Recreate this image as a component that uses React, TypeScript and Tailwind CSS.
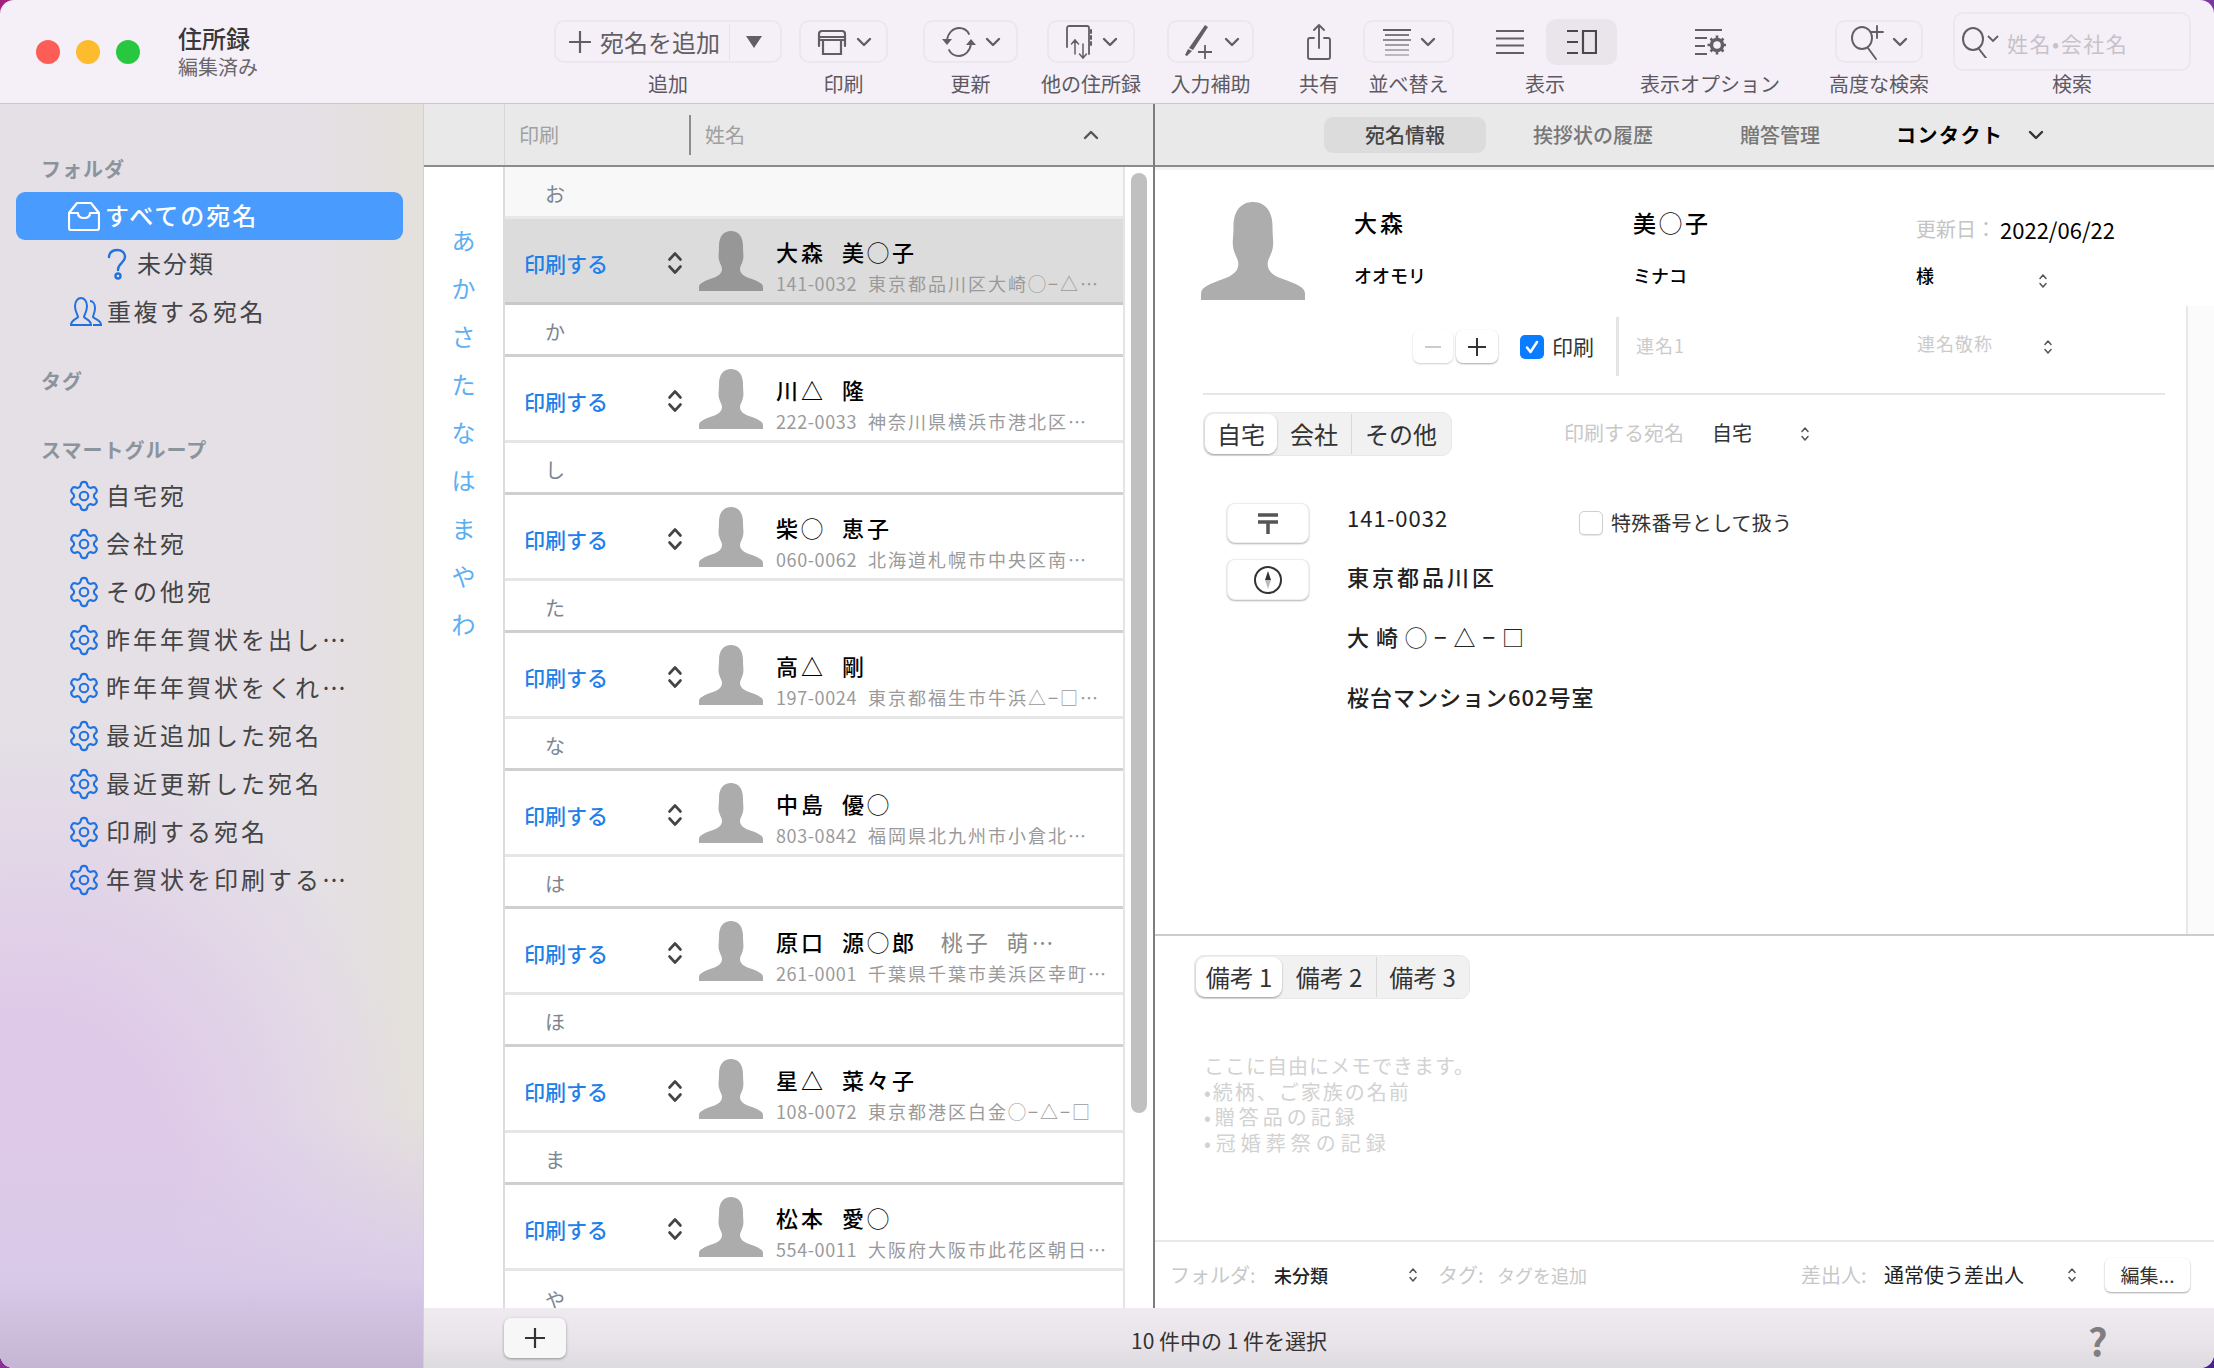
import React from 'react';
import { Settings } from 'lucide-react';

const ICON = '#625e64';

const Chevron: React.FC<{ dir?: 'up' | 'down'; color?: string }> = ({ dir = 'down', color = ICON }) => (
    <svg width="16" height="10" viewBox="0 0 16 10" fill="none" stroke={color} strokeWidth="2.4" strokeLinecap="round" strokeLinejoin="round">
        <path d={dir === 'down' ? 'M2 2l6 6 6-6' : 'M2 8l6-6 6 6'} />
    </svg>
);

const UpDown: React.FC<{ small?: boolean }> = ({ small }) =>
    small ? (
        <svg width="10" height="16" viewBox="0 0 10 16" fill="none" stroke="#555" strokeWidth="1.5" strokeLinecap="round" strokeLinejoin="round" className="shrink-0">
            <path d="M2 5.5L5 2l3 3.5M2 10.5L5 14l3-3.5" />
        </svg>
    ) : (
        <svg width="16" height="24" viewBox="0 0 16 24" fill="none" stroke="#444" strokeWidth="2.6" strokeLinecap="round" strokeLinejoin="round" className="shrink-0 mt-[4px]">
            <path d="M2.5 8.5L8 2.5l5.5 6M2.5 15.5L8 21.5l5.5-6" />
        </svg>
    );

const Silhouette: React.FC<{ w: number; h: number; color: string }> = ({ w, h, color }) => (
    <svg width={w} height={h} viewBox="0 0 64 60" preserveAspectRatio="none" className="shrink-0">
        <path
            fill={color}
            d="M32 0C25 0 20 5 20 15C20 22 19 25 20 29C21 33 23 35 23 38C23 42 20 45 14 47C6 50 0 52 0 56L0 60L64 60L64 56C64 52 58 50 50 47C44 45 41 42 41 38C41 35 43 33 44 29C45 25 44 22 44 15C44 5 39 0 32 0Z"
        />
    </svg>
);

// toolbar icons
const PrintIcon = () => (
    <svg width="32" height="32" viewBox="0 0 32 32" fill="none" stroke={ICON} strokeWidth="2.2">
        <path d="M3 20V8a3 3 0 0 1 3-3h20a3 3 0 0 1 3 3v12M3 11h26" strokeLinecap="round" />
        <path d="M3 14h26M7 14h18v14H7z" />
    </svg>
);

const RefreshIcon = () => (
    <svg width="36" height="36" viewBox="0 0 36 36" fill="none" stroke={ICON} strokeWidth="1.8">
        <path d="M6 16C7 9 12 4 18 4c4 0 8 2 10 6M30 20c-1 7-6 12-12 12-4 0-8-2-10-6" strokeLinecap="round" />
        <path d="M1 15h10l-5 6zM25 21h10l-5-6z" fill={ICON} stroke="none" />
    </svg>
);

const AddressBookIcon = () => (
    <svg width="30" height="38" viewBox="0 0 30 38" fill="none" stroke={ICON} strokeWidth="1.8" strokeLinecap="round">
        <path d="M3 24V5a2 2 0 0 1 2-2h18a2 2 0 0 1 2 2v26" />
        <path d="M27 7v3M27 13v3M27 19v3" strokeWidth="2" />
        <path d="M11 31V17M7.5 21L11 17l3.500 4M19 21v14M15.500 31l3.500 4 3.500-4" strokeWidth="1.500" />
    </svg>
);

const PenPlusIcon = () => (
    <svg width="34" height="36" viewBox="0 0 34 36" fill="none" stroke={ICON}>
        <path d="M23 1l3 2-15 23-4-2z" fill={ICON} stroke="none" />
        <path d="M6 25l4 2-5 5-2-1z" fill={ICON} stroke="none" />
        <path d="M23 21v14M16 28h14" strokeWidth="1.800" />
    </svg>
);

const ShareIcon = () => (
    <svg width="26" height="38" viewBox="0 0 26 38" fill="none" stroke={ICON} strokeWidth="1.900" strokeLinecap="round" strokeLinejoin="round">
        <path d="M8 15H4a2 2 0 0 0-2 2v17a2 2 0 0 0 2 2h18a2 2 0 0 0 2-2V17a2 2 0 0 0-2-2h-4" />
        <path d="M13 25V2M8 7l5-5 5 5" />
    </svg>
);

const SortIcon = () => (
    <svg width="30" height="28" viewBox="0 0 30 28" fill="none" strokeWidth="2">
        <path d="M1 2h28" stroke="#625e64" />
        <path d="M3 7h24" stroke="#7c787e" />
        <path d="M1 12h28" stroke="#8f8b91" />
        <path d="M3 17h24" stroke="#a09ca2" />
        <path d="M3 22h24" stroke="#b0acb2" />
        <path d="M3 27h24" stroke="#bcb8be" />
    </svg>
);

const ListIcon = () => (
    <svg width="30" height="26" viewBox="0 0 30 26" fill="none" stroke={ICON} strokeWidth="2.200">
        <path d="M1 2h28M1 9.500h28M1 16.500h28M1 24h28" />
    </svg>
);

const SplitIcon = () => (
    <svg width="30" height="26" viewBox="0 0 30 26" fill="none" stroke="#4b474d" strokeWidth="2.200">
        <path d="M0 2h11M0 13h11M0 24h11" />
        <path d="M16 2h13v22H16z" />
    </svg>
);

const ViewOptionsIcon = () => (
    <svg width="32" height="28" viewBox="0 0 32 28" fill="none" stroke={ICON} strokeWidth="2">
        <path d="M1 2h27M1 10h12M1 18h10M1 26h12" />
        <circle cx="23" cy="17" r="5.500" strokeWidth="3.500" />
        <path d="M23 7.500v3M23 23.500v3M13.500 17h3M29.500 17h3M16.500 10.500l2 2M27.500 21.500l2 2M16.500 23.500l2-2M27.500 12.500l2-2" strokeWidth="2.600" />
    </svg>
);

const SearchPlusIcon = () => (
    <svg width="34" height="36" viewBox="0 0 34 36" fill="none" stroke={ICON} strokeWidth="1.900" strokeLinecap="round">
        <ellipse cx="12" cy="14" rx="10" ry="11" />
        <path d="M18 24l8 11M27 2v12M21 8h12" />
    </svg>
);

const SearchIcon = () => (
    <svg width="26" height="32" viewBox="0 0 26 32" fill="none" stroke={ICON} strokeWidth="2" strokeLinecap="round">
        <ellipse cx="12" cy="13" rx="10" ry="11" />
        <path d="M18 23l7 9" />
    </svg>
);

const ToolButton: React.FC<{ w: string; children: React.ReactNode }> = ({ w, children }) => (
    <div className={`${w} h-[43px] rounded-[10px] border-2 border-[#ebe7ed] flex items-center justify-center gap-[8px]`}>{children}</div>
);

const ToolGroup: React.FC<{ label: string; ml: string; w: string; children: React.ReactNode }> = ({ label, ml, w, children }) => (
    <div className={`${ml} ${w} shrink-0 flex flex-col items-center`}>
        <div className="h-[43px] mt-[8px] flex items-center justify-center">{children}</div>
        <div className="mt-[9px] text-[20px] leading-[24px] text-[#5d595f] whitespace-nowrap">{label}</div>
    </div>
);

const Toolbar = () => (
    <div className="h-[104px] shrink-0 bg-[#f5f0f7] border-b border-[#c9c7ca] flex items-start pt-[12px] relative z-10">
        <div className="flex items-center gap-[16px] ml-[36px] mt-[28px]">
            <span className="w-[24px] h-[24px] rounded-full bg-[#fc5d57]" />
            <span className="w-[24px] h-[24px] rounded-full bg-[#fdbb2e]" />
            <span className="w-[24px] h-[24px] rounded-full bg-[#27c83f]" />
        </div>
        <div className="ml-[38px] w-[376px] shrink-0 mt-[10px]">
            <div className="text-[24px] leading-[32px] font-medium text-[#3a383b]">住所録</div>
            <div className="text-[20px] leading-[26px] text-[#6a676b]">編集済み</div>
        </div>
        <ToolGroup label="追加" ml="ml-0" w="w-[228px]">
            <div className="w-[228px] h-[43px] rounded-[10px] border-2 border-[#ebe7ed] flex items-center pl-[12px]">
                <svg width="24" height="24" viewBox="0 0 22 22" stroke={ICON} strokeWidth="2">
                    <path d="M11 1v20M1 11h20" />
                </svg>
                <span className="ml-[8px] text-[24px] leading-none text-[#625e64] whitespace-nowrap">宛名を追加</span>
                <span className="ml-[9px] w-px h-[36px] bg-[#e6e2e8]" />
                <svg width="18" height="14" viewBox="0 0 18 14" className="ml-[15px]">
                    <path d="M1 1h16l-8 12z" fill={ICON} />
                </svg>
            </div>
        </ToolGroup>
        <ToolGroup label="印刷" ml="ml-[17px]" w="w-[89px]">
            <ToolButton w="w-[89px]">
                <PrintIcon />
                <Chevron />
            </ToolButton>
        </ToolGroup>
        <ToolGroup label="更新" ml="ml-[35px]" w="w-[95px]">
            <ToolButton w="w-[95px]">
                <RefreshIcon />
                <Chevron />
            </ToolButton>
        </ToolGroup>
        <ToolGroup label="他の住所録" ml="ml-[29px]" w="w-[88px]">
            <ToolButton w="w-[88px]">
                <AddressBookIcon />
                <Chevron />
            </ToolButton>
        </ToolGroup>
        <ToolGroup label="入力補助" ml="ml-[32px]" w="w-[87px]">
            <ToolButton w="w-[87px]">
                <PenPlusIcon />
                <Chevron />
            </ToolButton>
        </ToolGroup>
        <ToolGroup label="共有" ml="ml-[45px]" w="w-[40px]">
            <ShareIcon />
        </ToolGroup>
        <ToolGroup label="並べ替え" ml="ml-[24px]" w="w-[91px]">
            <ToolButton w="w-[91px]">
                <SortIcon />
                <Chevron />
            </ToolButton>
        </ToolGroup>
        <ToolGroup label="表示" ml="ml-[19px]" w="w-[144px]">
            <div className="flex items-center">
                <span className="w-[73px] flex justify-center">
                    <ListIcon />
                </span>
                <span className="w-[71px] h-[46px] rounded-[10px] bg-[#e9e5eb] flex items-center justify-center">
                    <SplitIcon />
                </span>
            </div>
        </ToolGroup>
        <ToolGroup label="表示オプション" ml="ml-[23px]" w="w-[140px]">
            <ViewOptionsIcon />
        </ToolGroup>
        <ToolGroup label="高度な検索" ml="ml-[55px]" w="w-[88px]">
            <ToolButton w="w-[88px]">
                <SearchPlusIcon />
                <Chevron />
            </ToolButton>
        </ToolGroup>
        <div className="ml-[30px] w-[238px] shrink-0 flex flex-col items-center">
            <div className="w-[238px] h-[59px] rounded-[10px] border-2 border-[#ebe7ed] flex items-center pl-[6px]">
                <SearchIcon />
                <svg width="12" height="8" viewBox="0 0 12 8" fill="none" stroke={ICON} strokeWidth="1.800" className="mb-[6px]">
                    <path d="M1 1l5 5 5-5" />
                </svg>
                <span className="ml-[8px] mt-[4px] text-[21px] tracking-[1.500px] text-[#c6c2c8] whitespace-nowrap">姓名•会社名</span>
            </div>
            <div className="mt-px text-[20px] leading-[24px] text-[#5d595f]">検索</div>
        </div>
    </div>
);

const InboxIcon = () => (
    <svg width="32" height="30" viewBox="0 0 32 30" fill="none" stroke="#fff" strokeWidth="2.200" strokeLinejoin="round" className="shrink-0">
        <path d="M1 12L9 2h14l8 10v15a2 2 0 0 1-2 2H3a2 2 0 0 1-2-2z" />
        <path d="M1 12h9c0 3 2 5 6 5s6-2 6-5h9" />
    </svg>
);

const QuestionIcon = () => (
    <svg width="20" height="32" viewBox="0 0 20 32" fill="none" stroke="#1f72e0" strokeWidth="2.400" className="shrink-0">
        <path d="M2 9c0-4 3-7 8-7s8 3 8 7c0 6-7 6-7 13" strokeLinecap="round" />
        <circle cx="11" cy="28" r="2.500" />
    </svg>
);

const DuplicateIcon = () => (
    <svg width="32" height="30" viewBox="0 0 32 30" fill="none" stroke="#1f72e0" strokeWidth="2" className="shrink-0">
        <path d="M1 28c0-5 6-6 7-8 0-2-3-5-3-11 0-5 3-8 6-8s6 3 6 8c0 6-3 9-3 11 1 2 7 3 7 8z" />
        <path d="M20 4c3 0 5 3 5 7 0 5-2 7-2 9 1 2 8 3 8 8h-8" />
    </svg>
);

const SidebarLabel: React.FC<{ mt: string; children: React.ReactNode }> = ({ mt, children }) => (
    <div className={`${mt} pl-[41px] h-[28px] text-[20px] leading-[28px] font-bold tracking-[1px] text-[#8b949d]`}>{children}</div>
);

const smartGroups = ['自宅宛', '会社宛', 'その他宛', '昨年年賀状を出し…', '昨年年賀状をくれ…', '最近追加した宛名', '最近更新した宛名', '印刷する宛名', '年賀状を印刷する…'];

const Sidebar = () => (
    <div className="w-[424px] shrink-0 h-full pt-[51px] bg-[linear-gradient(180deg,transparent_93%,#c5b6d3_100%),linear-gradient(180deg,transparent_80%,#d9c9e9_94%),radial-gradient(ellipse_380px_430px_at_8%_84%,#dfc9e8_35%,transparent),linear-gradient(90deg,#e4e0e6_70%,#e4e0dc_100%)] border-r border-[#d3d0d3]">
        <SidebarLabel mt="mt-0">フォルダ</SidebarLabel>
        <div className="mt-[9px] ml-[16px] w-[387px] h-[48px] rounded-[9px] bg-[#4a9bfe] flex items-center pl-[52px] gap-[5px] text-white text-[24px] tracking-[2px] font-medium">
            <InboxIcon />
            <span className="-mt-[3px]">すべての宛名</span>
        </div>
        <div className="h-[48px] pl-[107px] flex items-center gap-[10px] text-[24px] tracking-[2px] text-[#444]">
            <QuestionIcon />
            <span className="-mt-[3px]">未分類</span>
        </div>
        <div className="h-[48px] pl-[70px] flex items-center gap-[5px] text-[24px] tracking-[2.500px] text-[#444]">
            <DuplicateIcon />
            <span className="-mt-[3px]">重複する宛名</span>
        </div>
        <SidebarLabel mt="mt-[31px]">タグ</SidebarLabel>
        <SidebarLabel mt="mt-[41px]">スマートグループ</SidebarLabel>
        <div className="mt-[8px]">
            {smartGroups.map((name) => (
                <div key={name} className="h-[48px] pl-[67px] flex items-center gap-[5px] text-[24px] tracking-[3px] text-[#444]">
                    <Settings size={34} strokeWidth={1.5} color="#1f72e0" className="shrink-0" />
                    <span className="-mt-[3px] whitespace-nowrap">{name}</span>
                </div>
            ))}
        </div>
    </div>
);

interface Person {
    section: string;
    name: string;
    extra?: string;
    zip: string;
    address: string;
}

const people: Person[] = [
    { section: 'お', name: '大森  美◯子', zip: '141-0032', address: '東京都品川区大崎◯−△…' },
    { section: 'か', name: '川△  隆', zip: '222-0033', address: '神奈川県横浜市港北区…' },
    { section: 'し', name: '柴◯  恵子', zip: '060-0062', address: '北海道札幌市中央区南…' },
    { section: 'た', name: '高△  剛', zip: '197-0024', address: '東京都福生市牛浜△−□…' },
    { section: 'な', name: '中島  優◯', zip: '803-0842', address: '福岡県北九州市小倉北…' },
    { section: 'は', name: '原口  源◯郎', extra: '桃子  萌…', zip: '261-0001', address: '千葉県千葉市美浜区幸町…' },
    { section: 'ほ', name: '星△  菜々子', zip: '108-0072', address: '東京都港区白金◯−△−□' },
    { section: 'ま', name: '松本  愛◯', zip: '554-0011', address: '大阪府大阪市此花区朝日…' },
];

const kana = ['あ', 'か', 'さ', 'た', 'な', 'は', 'ま', 'や', 'わ'];

const PersonRow: React.FC<{ person: Person; selected: boolean }> = ({ person, selected }) => (
    <>
        <div className={`h-[52px] shrink-0 pl-[40px] pt-[5px] flex items-center border-b-[3px] border-[#cfcfcf] text-[20px] text-[#7c8792] ${selected ? 'bg-[#f8f8f8] border-[#e8e8e8]' : ''}`}>
            {person.section}
        </div>
        <div className={`h-[86px] shrink-0 flex items-center border-b-[3px] ${selected ? 'bg-[#dcdcdc] border-[#c8c8c8]' : 'border-[#e6e6e6]'}`}>
            <span className="ml-[19px] mt-[6px] w-[143px] shrink-0 text-[21px] font-medium text-[#1f80e8] whitespace-nowrap">印刷する</span>
            <UpDown />
            <span className="ml-[16px]">
                <Silhouette w={64} h={60} color={selected ? '#979797' : '#acacac'} />
            </span>
            <div className="ml-[13px] min-w-0 flex-1 mt-[9px]">
                <div className="text-[22px] leading-[32px] font-medium tracking-[3px] text-black whitespace-pre">
                    {person.name}
                    {person.extra && <span className="font-normal text-[#8a8a8a]">{'   ' + person.extra}</span>}
                </div>
                <div className="mt-[3px] text-[18px] leading-[26px] text-[#9a9a9a] whitespace-nowrap">
                    <span className="tracking-[0.600px]">{person.zip}</span>
                    <span className="ml-[11px] tracking-[2px]">{person.address}</span>
                </div>
            </div>
        </div>
    </>
);

const ListPanel = () => (
    <div className="w-[731px] shrink-0 flex flex-col min-h-0 border-r-2 border-[#7d7d7d]">
        <div className="h-[63px] shrink-0 bg-[#e9e9e9] border-b-2 border-[#8b8b8b] flex items-center">
            <div className="w-[81px] h-full border-r border-[#d8d8d8]" />
            <span className="ml-[14px] w-[170px] text-[20px] text-[#a0a0a0]">印刷</span>
            <span className="w-[2px] h-[40px] bg-[#8d8d8d]" />
            <span className="ml-[14px] text-[20px] text-[#a0a0a0]">姓名</span>
            <span className="ml-auto mr-[24px]">
                <Chevron dir="up" color="#555" />
            </span>
            <span className="w-[30px]" />
        </div>
        <div className="flex-1 min-h-0 flex overflow-hidden">
            <div className="w-[81px] shrink-0 pt-[49px] border-r-2 border-[#dcdcdc] flex flex-col items-center">
                {kana.map((k) => (
                    <span key={k} className="h-[48px] leading-[48px] text-[24px] text-[#5cb0f2]">
                        {k}
                    </span>
                ))}
            </div>
            <div className="w-[620px] shrink-0 flex flex-col border-r-2 border-[#e4e4e4]">
                {people.map((p, i) => (
                    <PersonRow key={p.section} person={p} selected={i === 0} />
                ))}
                <div className="h-[52px] shrink-0 pl-[40px] pt-[5px] flex items-center text-[20px] text-[#7c8792]">や</div>
            </div>
            <div className="flex-1 pt-[6px] flex justify-center">
                <div className="w-[16px] h-[940px] rounded-full bg-[#c0c0c0]" />
            </div>
        </div>
    </div>
);

const Segmented: React.FC<{ items: { label: string; w: string }[]; sepAfter: number }> = ({ items, sepAfter }) => (
    <div className="inline-flex h-[44px] rounded-[10px] bg-[#f1f1f1] border border-[#e8e8e8] p-px text-[24px] text-[#333]">
        {items.map((item, i) => (
            <span
                key={item.label}
                className={`${item.w} flex items-center justify-center whitespace-nowrap ${i === 0 ? 'bg-white rounded-[9px] shadow-[0_1px_2px_rgba(0,0,0,0.35)]' : ''} ${i === sepAfter ? 'border-r border-[#d8d8d8]' : ''}`}
            >
                {item.label}
            </span>
        ))}
    </div>
);

const CardButton: React.FC<{ h: string; children: React.ReactNode }> = ({ h, children }) => (
    <div className={`w-[82px] ${h} shrink-0 rounded-[8px] bg-white border border-[#eeeeee] shadow-[0_1px_2px_rgba(0,0,0,0.3)] flex items-center justify-center`}>{children}</div>
);

const DetailPanel = () => (
    <div className="flex-1 min-w-0 flex flex-col bg-white">
        <div className="h-[66px] shrink-0 border-b-[3px] border-[#f3f3f3]">
            <div className="h-[63px] bg-[#e9e9e9] border-b-2 border-[#8b8b8b] flex items-center text-[20px] font-medium">
                <span className="ml-[169px] w-[162px] h-[36px] rounded-[9px] bg-[#dcdcdc] flex items-center justify-center text-[#444]">宛名情報</span>
                <span className="ml-[47px] text-[#777] whitespace-nowrap">挨拶状の履歴</span>
                <span className="ml-[87px] text-[#777] whitespace-nowrap">贈答管理</span>
                <span className="ml-[76px] text-black font-bold tracking-[1.500px] whitespace-nowrap">コンタクト</span>
                <span className="ml-[24px]">
                    <Chevron color="#333" />
                </span>
            </div>
        </div>

        {/* 氏名 */}
        <div className="h-[136px] shrink-0 pt-[32px] pl-[46px] flex items-start">
            <Silhouette w={104} h={98} color="#adadad" />
            <div className="ml-[49px] w-[279px] shrink-0 text-black">
                <div className="h-[42px] -mt-[1px] flex items-center text-[23px] font-medium tracking-[3px]">大森</div>
                <div className="mt-[11px] h-[42px] flex items-center text-[18px] font-medium">オオモリ</div>
            </div>
            <div className="w-[283px] shrink-0 text-black">
                <div className="h-[42px] -mt-[1px] flex items-center text-[23px] font-medium tracking-[3px]">美◯子</div>
                <div className="mt-[11px] h-[42px] flex items-center text-[18px] font-medium">ミナコ</div>
            </div>
            <div className="flex-1 min-w-0">
                <div className="h-[42px] mt-[6px] flex items-center whitespace-nowrap">
                    <span className="w-[84px] text-[20px] text-[#c4c4c4]">更新日：</span>
                    <span className="text-[22px] text-black">2022/06/22</span>
                </div>
                <div className="mt-[4px] h-[42px] flex items-center text-[18px] font-medium text-black">
                    <span className="w-[122px]">様</span>
                    <span className="mt-[12px]">
                        <UpDown small />
                    </span>
                </div>
            </div>
        </div>

        <div className="h-[628px] shrink-0 flex">
            <div className="flex-1 min-w-0 border-r-2 border-[#e8e8e8]">
                <div className="mt-[11px] h-[59px] pl-[258px] flex items-center">
                    <span className="w-[40px] h-[33px] rounded-[7px] bg-white shadow-[0_1px_2px_rgba(0,0,0,0.2)] flex items-center justify-center">
                        <svg width="16" height="4" viewBox="0 0 16 4" stroke="#cccccc" strokeWidth="2">
                            <path d="M0 2h16" />
                        </svg>
                    </span>
                    <span className="ml-[3px] w-[42px] h-[33px] rounded-[7px] bg-white shadow-[0_1px_2px_rgba(0,0,0,0.35)] flex items-center justify-center">
                        <svg width="18" height="18" viewBox="0 0 18 18" stroke="#333" strokeWidth="2">
                            <path d="M9 0v18M0 9h18" />
                        </svg>
                    </span>
                    <span className="ml-[22px] w-[24px] h-[24px] rounded-[5px] bg-[#0a7cff] flex items-center justify-center">
                        <svg width="16" height="16" viewBox="0 0 16 16" fill="none" stroke="#fff" strokeWidth="2.500" strokeLinecap="round" strokeLinejoin="round">
                            <path d="M3 8.500l3.500 4.500L13 3" />
                        </svg>
                    </span>
                    <span className="ml-[8px] w-[64px] text-[21px] text-[#333]">印刷</span>
                    <span className="w-[3px] h-[59px] bg-[#e4e4e4]" />
                    <span className="ml-[17px] w-[281px] -mt-[3px] text-[18px] tracking-[1px] text-[#cbcbcb]">連名1</span>
                    <span className="w-[126px] -mt-[6px] text-[18px] tracking-[1px] text-[#cbcbcb]">連名敬称</span>
                    <UpDown small />
                </div>
                <div className="mt-[17px] ml-[48px] w-[962px] h-[2px] bg-[#e6e6e6]" />
                <div className="mt-[17px] ml-[48px] flex items-center">
                    <Segmented
                        items={[
                            { label: '自宅', w: 'w-[72px]' },
                            { label: '会社', w: 'w-[75px]' },
                            { label: 'その他', w: 'w-[98px]' },
                        ]}
                        sepAfter={1}
                    />
                    <span className="ml-[112px] w-[148px] -mt-[3px] text-[20px] text-[#c8c8c8]">印刷する宛名</span>
                    <span className="w-[88px] -mt-[3px] text-[20px] text-[#333]">自宅</span>
                    <UpDown small />
                </div>
                <div className="mt-[47px] ml-[72px] flex items-center">
                    <CardButton h="h-[40px]">
                        <svg width="22" height="22" viewBox="0 0 22 22" fill="none" stroke="#555" strokeWidth="3.500">
                            <path d="M1 3h20M1 10h20M11 10v12" />
                        </svg>
                    </CardButton>
                    <span className="ml-[38px] w-[232px] -mt-[11px] text-[22px] tracking-[1px] text-[#222]">141-0032</span>
                    <span className="w-[24px] h-[24px] rounded-[5px] bg-white border border-[#cfcfcf] shadow-[0_1px_1px_rgba(0,0,0,0.1)]" />
                    <span className="ml-[8px] text-[20px] tracking-[0.200px] text-[#333] whitespace-nowrap">特殊番号として扱う</span>
                </div>
                <div className="mt-[16px] ml-[72px] flex items-center">
                    <CardButton h="h-[41px]">
                        <svg width="30" height="30" viewBox="0 0 30 30" fill="none" stroke="#333" strokeWidth="2">
                            <circle cx="15" cy="15" r="13" />
                            <path d="M15 6l3 9h-6z" fill="#333" stroke="none" />
                            <path d="M15 24l-3-9h6z" fill="#bbb" stroke="none" />
                        </svg>
                    </CardButton>
                    <span className="ml-[38px] -mt-[6px] text-[22px] tracking-[3px] font-medium text-[#222]">東京都品川区</span>
                </div>
                <div className="mt-[6px] ml-[192px] h-[60px] flex items-center text-[22px] tracking-[7px] font-medium text-[#222] whitespace-nowrap">大崎◯−△−□</div>
                <div className="ml-[192px] h-[60px] flex items-center text-[22px] tracking-[1px] font-medium text-[#222] whitespace-nowrap">桜台マンション602号室</div>
            </div>
            <div className="w-[26px] shrink-0 bg-[#fbfbfb]" />
        </div>

        {/* 備考 */}
        <div className="h-[306px] shrink-0 border-t-2 border-[#cccccc] pt-[19px] pl-[39px]">
            <Segmented
                items={[
                    { label: '備考 1', w: 'w-[86px]' },
                    { label: '備考 2', w: 'w-[95px]' },
                    { label: '備考 3', w: 'w-[91px]' },
                ]}
                sepAfter={1}
            />
            <div className="mt-[54px] ml-[10px] text-[20px] leading-[25.700px] text-[#d2d2d2] whitespace-nowrap">
                <div className="tracking-[1px]">ここに自由にメモできます。</div>
                <div className="tracking-[2px]">•続柄、ご家族の名前</div>
                <div className="tracking-[4px]">•贈答品の記録</div>
                <div className="tracking-[5px]">•冠婚葬祭の記録</div>
            </div>
        </div>

        <div className="h-[68px] shrink-0 border-t-2 border-[#e8e8e8] pl-[15px] flex items-center text-[19px] whitespace-nowrap">
            <span className="w-[104px] text-[20px] text-[#c8c8c8]">フォルダ:</span>
            <span className="w-[134px] font-medium text-[18px] text-[#222]">未分類</span>
            <UpDown small />
            <span className="ml-[20px] w-[59px] text-[20px] text-[#c8c8c8]">タグ:</span>
            <span className="w-[304px] text-[18px] text-[#c8c8c8]">タグを追加</span>
            <span className="w-[83px] text-[20px] text-[#c8c8c8]">差出人:</span>
            <span className="w-[183px] text-[20px] text-[#222]">通常使う差出人</span>
            <UpDown small />
            <span className="ml-[28px] w-[85px] h-[34px] rounded-[6px] bg-white shadow-[0_1px_2px_rgba(0,0,0,0.35)] flex items-center justify-center text-[19px] text-[#333]">編集...</span>
        </div>
    </div>
);

const BottomBar = () => (
    <div className="h-[60px] shrink-0 bg-[linear-gradient(180deg,#eeeaf0_0%,#e9e5ea_50%,#dedbe0_100%)] flex items-center">
        <span className="ml-[80px] w-[62px] h-[40px] rounded-[7px] bg-[#f8f7f8] shadow-[0_1px_3px_rgba(0,0,0,0.35)] flex items-center justify-center">
            <svg width="22" height="22" viewBox="0 0 22 22" stroke="#333" strokeWidth="2.200">
                <path d="M11 1v20M1 11h20" />
            </svg>
        </span>
        <span className="ml-[565px] mt-[6px] w-[195px] text-[21px] text-[#333] whitespace-nowrap">10 件中の 1 件を選択</span>
        <span className="ml-[762px] mt-[5px] text-[38px] leading-none font-bold text-[#7f7d80]">?</span>
    </div>
);

export default function App() {
    return (
        <div className="w-[2214px] h-[1368px] overflow-hidden bg-[linear-gradient(135deg,#a3207f_0%,#7a3aa0_60%,#4a2290_100%)] font-['Noto_Sans_CJK_JP','Liberation_Sans',sans-serif]">
            <div className="w-full h-full rounded-[14px] overflow-hidden flex flex-col">
                <Toolbar />
                <div className="flex-1 min-h-0 flex">
                    <Sidebar />
                    <div className="flex-1 min-w-0 flex flex-col bg-white">
                        <div className="flex-1 min-h-0 flex">
                            <ListPanel />
                            <DetailPanel />
                        </div>
                        <BottomBar />
                    </div>
                </div>
            </div>
        </div>
    );
}
